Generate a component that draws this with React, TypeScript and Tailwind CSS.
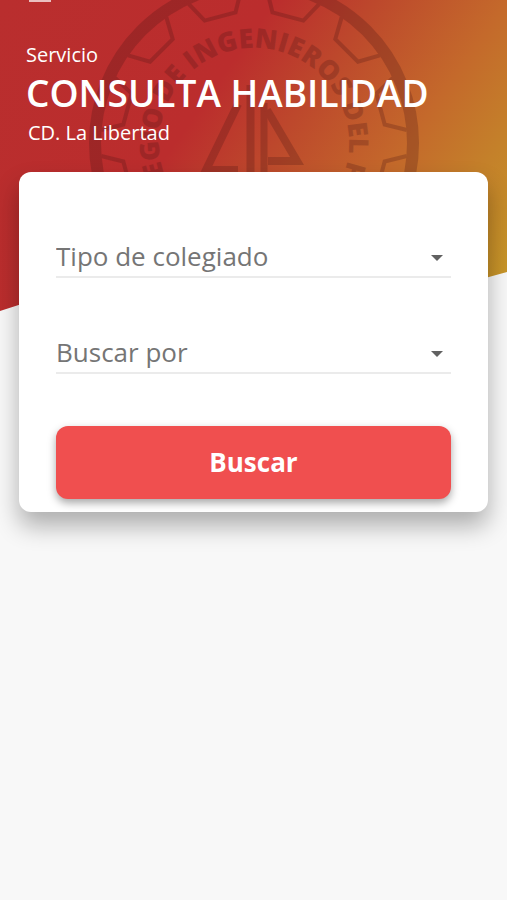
import { useState } from "react";

const NOTCH_ANGLES = [15, 45, 75, 105, 135, 165, 195, 225, 255, 285, 315, 345];

function Emblem() {
  return (
    <svg
      viewBox="0 0 340 340"
      className="absolute -top-[27px] left-1/2 h-[340px] w-[340px] -translate-x-1/2 opacity-25"
      aria-hidden="true"
    >
      <defs>
        <path id="motto" d="M170 265 A95 95 0 0 1 170 75 A95 95 0 0 1 170 265" />
      </defs>
      <g fill="none" stroke="#4a1414">
        <circle cx="170" cy="170" r="159" strokeWidth="12" />
        {NOTCH_ANGLES.map((angle) => (
          <path
            key={angle}
            d="M321 143 L301 154 V186 L321 197"
            strokeWidth="4"
            transform={`rotate(${angle} 170 170)`}
          />
        ))}
        <path d="M166.5 112 V240" strokeWidth="8" />
        <path d="M180 130 V240" strokeWidth="7" />
        <path d="M183 137 L213 188 H184" strokeWidth="8" />
        <path d="M154 131 L122 197 H154" strokeWidth="8" />
      </g>
      <g
        fill="#4a1414"
        className="font-['Open_Sans',sans-serif] text-[27px] font-extrabold"
      >
        <text textAnchor="end">
          <textPath href="#motto" startOffset="50%">
            COLEGIO DE INGE
          </textPath>
        </text>
        <text>
          <textPath href="#motto" startOffset="50%">
            NIEROS DEL PERÚ
          </textPath>
        </text>
      </g>
    </svg>
  );
}

type FieldProps = {
  label: string;
  options: string[];
};

function SelectField({ label, options }: FieldProps) {
  const [value, setValue] = useState("");
  return (
    <div className="relative border-b-2 border-[#ebebeb]">
      <select
        aria-label={label}
        value={value}
        onChange={(event) => setValue(event.target.value)}
        className="block h-10 w-full appearance-none bg-transparent pr-10 text-[26px] text-[#757575] outline-none"
      >
        <option value="">{label}</option>
        {options.map((option) => (
          <option key={option}>{option}</option>
        ))}
      </select>
      <svg
        viewBox="0 0 12 6"
        className="pointer-events-none absolute top-[19px] right-2 h-[6px] w-3"
        aria-hidden="true"
      >
        <path d="M0 0 H12 L6 6 Z" fill="#616161" />
      </svg>
    </div>
  );
}

export default function App() {
  return (
    <div className="min-h-screen bg-[#f8f8f8] font-['Open_Sans',sans-serif]">
      <header className="relative overflow-hidden bg-[linear-gradient(125deg,#b92e2e_0%,#bb2d2d_38%,#bd482c_52%,#c4692b_70%,#c4812a_83%,#c79528_96%)] px-[26px] pb-[164px] text-white [clip-path:polygon(0_0,100%_0,100%_272px,75%_307px,30%_262px,0_100%)]">
        <Emblem />
        <div className="relative">
          <button
            type="button"
            aria-label="Menú"
            className="flex h-[43px] w-7 items-start justify-center"
          >
            <span className="h-[2px] w-[22px] bg-white/70" />
          </button>
          <p className="text-[20px] leading-6">Servicio</p>
          <h1 className="text-[37px] leading-[52px] font-semibold whitespace-nowrap">
            CONSULTA HABILIDAD
          </h1>
          <p className="pl-[2px] text-[20px] leading-7">CD. La Libertad</p>
        </div>
      </header>
      <main className="relative -mt-[139px] px-[19px]">
        <form
          onSubmit={(event) => event.preventDefault()}
          className="flex flex-col rounded-xl bg-white px-[37px] pt-16 pb-[13px] shadow-[0_14px_24px_rgba(0,0,0,0.3)]"
        >
          <SelectField label="Tipo de colegiado" options={["Ordinario", "Vitalicio"]} />
          <div className="mt-[54px]">
            <SelectField label="Buscar por" options={["CIP", "DNI", "Apellidos"]} />
          </div>
          <button
            type="submit"
            className="mt-[52px] h-[73px] rounded-xl bg-[#f04f4f] text-[26px] font-bold text-white shadow-[0_4px_8px_rgba(0,0,0,0.35)]"
          >
            Buscar
          </button>
        </form>
      </main>
    </div>
  );
}
